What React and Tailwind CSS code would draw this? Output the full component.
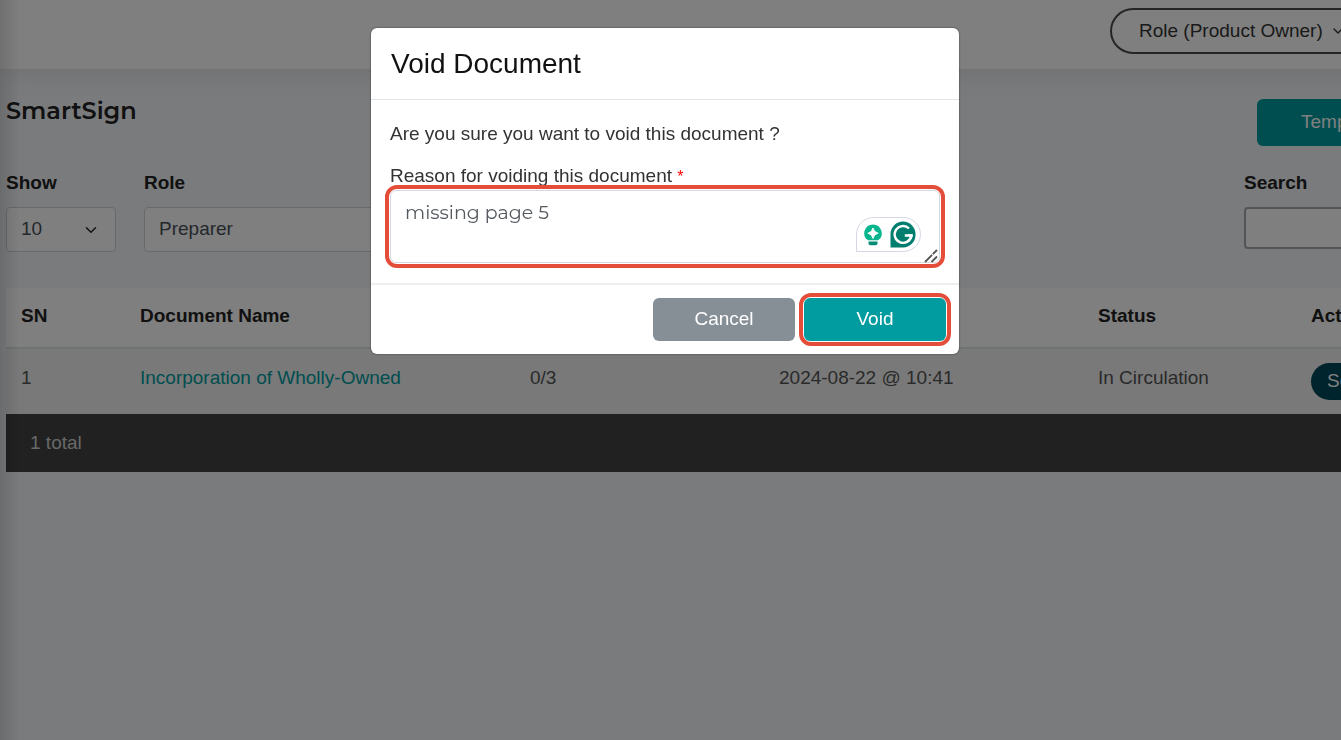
import { useState } from 'react';
import { ChevronDown } from 'lucide-react';

const documents = [
  {
    sn: 1,
    name: 'Incorporation of Wholly-Owned',
    signed: '0/3',
    date: '2024-08-22 @ 10:41',
    status: 'In Circulation',
  },
];

const SelectBox = ({ id, options, className }) => (
  <div className={`relative ${className}`}>
    <select
      id={id}
      className="h-[45px] w-full appearance-none rounded border border-[#ced4da] bg-white pl-[14px] pr-10 text-[19px] text-[#495057]"
    >
      {options.map((option) => (
        <option key={option}>{option}</option>
      ))}
    </select>
    <ChevronDown className="pointer-events-none absolute right-4 top-[14px] h-[18px] w-[18px] text-[#212529]" />
  </div>
);

const Header = () => (
  <header className="relative z-10 flex h-[69px] justify-end bg-white pt-2 pr-[120px] shadow-[0_0_30px_rgba(0,0,0,0.12)]">
    <button
      type="button"
      className="flex h-[46px] w-[261px] items-center gap-[7px] rounded-full border-2 border-[#4a4a4a] pl-[27px] text-[19px] text-[#343434]"
    >
      Role (Product Owner)
      <ChevronDown className="h-4 w-4" />
    </button>
  </header>
);

const DocumentTable = () => (
  <div>
    <table className="w-full table-fixed text-left">
      <colgroup>
        <col className="w-[119px]" />
        <col className="w-[390px]" />
        <col className="w-[249px]" />
        <col className="w-[319px]" />
        <col className="w-[213px]" />
        <col />
      </colgroup>
      <thead>
        <tr className="h-[60px] border-b-2 border-[#dee5e7] bg-white text-[#222]">
          <th className="px-[15px] pb-[2px]">SN</th>
          <th className="px-[15px] pb-[2px]">Document Name</th>
          <th className="px-[15px] pb-[2px]">Signed</th>
          <th className="px-[15px] pb-[2px]">Date</th>
          <th className="px-[15px] pb-[2px]">Status</th>
          <th className="px-[15px] pb-[2px]">Action</th>
        </tr>
      </thead>
      <tbody>
        {documents.map((doc) => (
          <tr key={doc.sn} className="h-[66px] bg-[#f2f2f2] text-[#555]">
            <td className="px-[15px] pb-[6px]">{doc.sn}</td>
            <td className="px-[15px] pb-[6px]">
              <a href="#document" className="text-[#009ca0]">{doc.name}</a>
            </td>
            <td className="px-[15px] pb-[6px]">{doc.signed}</td>
            <td className="px-[15px] pb-[6px]">{doc.date}</td>
            <td className="px-[15px] pb-[6px]">{doc.status}</td>
            <td className="px-[15px]">
              <button
                type="button"
                className="h-[37px] w-[100px] rounded-full bg-[#00485a] px-4 text-left text-white"
              >
                Send
              </button>
            </td>
          </tr>
        ))}
      </tbody>
    </table>
    <div className="flex h-[58px] items-center bg-[#424242] px-6 text-[#d0d0d0]">
      {documents.length} total
    </div>
  </div>
);

// Floating assistant widget in the corner of the text box
const WritingAssistant = () => (
  <div className="absolute bottom-3 right-5 flex h-[35px] w-[65px] items-center gap-2 rounded-t-full rounded-br-full border border-[#d5d8e4] bg-white pl-[7px]">
    <svg viewBox="0 0 18 22" className="h-[22px] w-[18px]" aria-hidden="true">
      <path d="M9 .5a8.700 8.700 0 0 0-5 15.800h10A8.700 8.700 0 0 0 9 .5z" fill="#08b58d" />
      <path d="M4.500 17.500h9v1.800a2 2 0 0 1-2 2h-5a2 2 0 0 1-2-2z" fill="#078b74" />
      <path d="M9 4Q9.800 8.400 14.200 9.200 9.800 10 9 14.400 8.200 10 3.800 9.200 8.200 8.400 9 4z" fill="#fff" stroke="#fff" strokeWidth="1" />
    </svg>
    <svg viewBox="0 0 26 27" className="h-[27px] w-[26px]" aria-hidden="true">
      <path d="M13 .5A12.500 12.500 0 0 1 25.500 13v1A12.500 12.500 0 0 1 13 26.500H.5V13A12.500 12.500 0 0 1 13 .5z" fill="#027e6f" />
      <path
        d="M19 7.500A8.400 8.400 0 1 0 21.400 14.500H14.800"
        fill="none"
        stroke="#fff"
        strokeWidth="2.400"
      />
      <path d="M17.500 13.300h5.100v2.400l-1.500 2.500z" fill="#fff" />
    </svg>
  </div>
);

const VoidDialog = () => {
  const [reason, setReason] = useState('missing page 5');

  return (
    <div className="fixed inset-0 z-20 flex items-start justify-center bg-black/50 pt-7 pr-[11px]">
      <div
        role="dialog"
        aria-labelledby="void-title"
        className="w-[588px] rounded-md bg-white text-[19px] text-[#333] shadow-[0_0_2px_rgba(0,0,0,0.6)]"
      >
        <div className="border-b border-[#e2e6ea] px-5 pt-[15px] pb-[14px]">
          <h2 id="void-title" className="text-[28px] leading-[42px] text-[#111]">
            Void Document
          </h2>
        </div>
        <div className="px-[14px] pt-5 pb-[15px]">
          <p className="px-[5px] leading-7">Are you sure you want to void this document ?</p>
          <label htmlFor="reason" className="mt-[14px] block h-[23px] px-[5px] leading-7">
            Reason for voiding this document <span className="text-base text-[#f00]">*</span>
          </label>
          <div className="relative rounded-xl border-4 border-[#e44d3a] bg-white p-px">
            <textarea
              id="reason"
              value={reason}
              onChange={(e) => setReason(e.target.value)}
              className="block h-[73px] w-full resize-none rounded-md border border-[#d4d9df] px-[14px] py-2 font-['Montserrat',Inter,sans-serif] leading-7 text-[#555a60]"
            />
            <WritingAssistant />
            <svg
              viewBox="0 0 14 14"
              className="pointer-events-none absolute bottom-px right-[3px] h-[14px] w-[14px]"
              aria-hidden="true"
            >
              <path d="M1 13L13 1M7.500 13l5.500-5.500" fill="none" stroke="#555" strokeWidth="1.800" strokeDasharray="10 1" />
            </svg>
          </div>
        </div>
        <div className="flex items-center justify-end gap-1 border-t-2 border-[#eee] py-2 pr-2">
          <button type="button" className="h-[43px] w-[142px] rounded-md bg-[#868e96] text-white">
            Cancel
          </button>
          <div className="rounded-xl border-4 border-[#e44d3a] p-px">
            <button type="button" className="block h-[43px] w-[142px] rounded-md bg-[#009ca0] text-white">
              Void
            </button>
          </div>
        </div>
      </div>
    </div>
  );
};

export default function App() {
  return (
    <div className="relative min-h-screen overflow-hidden bg-[#f4f6f9] font-['Liberation_Sans',Arial,sans-serif] text-[19px]">
      <div className="w-[calc(100%+150px)]">
        <Header />
        <main className="pl-[6px] pr-6 pt-[26px]">
          <div className="flex items-start justify-between">
            <h1 className="font-['Montserrat',Inter,sans-serif] text-2xl font-semibold text-[#222]">
              SmartSign
            </h1>
            <button
              type="button"
              className="mt-1 h-[47px] w-[210px] rounded-md bg-[#009ca0] pl-11 text-left text-white"
            >
              Templates
            </button>
          </div>

          <div className="mt-[23px] flex items-start gap-7">
            <div>
              <label htmlFor="show" className="mb-[10px] block font-bold leading-7 text-[#222]">Show</label>
              <SelectBox id="show" options={['10', '25', '50']} className="w-[110px]" />
            </div>
            <div>
              <label htmlFor="role" className="mb-[10px] block font-bold leading-7 text-[#222]">Role</label>
              <SelectBox id="role" options={['Preparer', 'Signer']} className="w-[260px]" />
            </div>
            <div className="ml-auto w-[223px]">
              <label htmlFor="search" className="mb-[10px] block font-bold leading-7 text-[#222]">Search</label>
              <input
                id="search"
                type="search"
                className="h-[42px] w-full rounded-sm border-2 border-[#aaa] bg-white px-3"
              />
            </div>
          </div>

          <div className="mt-9">
            <DocumentTable />
          </div>
        </main>
      </div>
      <div className="pointer-events-none absolute inset-y-0 left-0 z-10 w-5 bg-linear-to-r from-black/12 to-transparent" />
      <VoidDialog />
    </div>
  );
}
